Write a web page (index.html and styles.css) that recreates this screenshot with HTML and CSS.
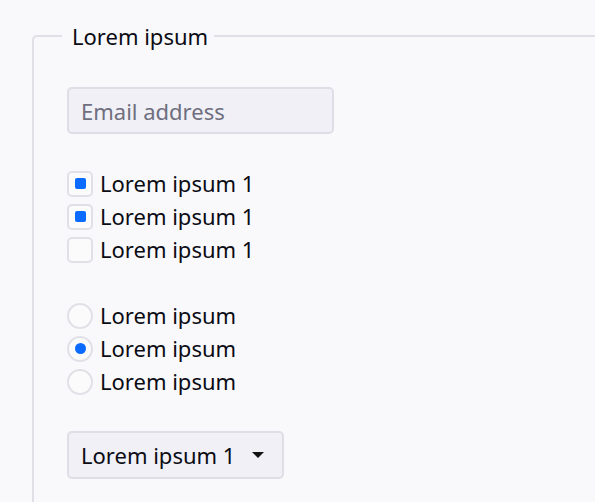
FILE: index.html
```html
<!DOCTYPE html>
<html lang="en">
<head>
<meta charset="utf-8">
<title>Form</title>
<link rel="stylesheet" href="styles.css">
</head>
<body>
<form class="form">
  <fieldset class="group">
    <legend class="group-title">Lorem ipsum</legend>
    <input class="text-input" type="email" placeholder="Email address">
    <div class="options">
      <label class="option"><span class="check is-on"></span>Lorem ipsum 1</label>
      <label class="option"><span class="check is-on"></span>Lorem ipsum 1</label>
      <label class="option"><span class="check"></span>Lorem ipsum 1</label>
    </div>
    <div class="options">
      <label class="option"><span class="radio"></span>Lorem ipsum</label>
      <label class="option"><span class="radio is-on"></span>Lorem ipsum</label>
      <label class="option"><span class="radio"></span>Lorem ipsum</label>
    </div>
    <div class="select">
      <span class="select-value">Lorem ipsum 1</span>
      <span class="select-arrow"></span>
    </div>
  </fieldset>
</form>
</body>
</html>
```

FILE: styles.css
```css
html, body {
  margin: 0;
  padding: 0;
  background: #f9f9fb;
}
body {
  font-family: "Noto Sans", "Open Sans", sans-serif;
  font-size: 22px;
  line-height: 33px;
  color: #0b0b14;
  overflow: hidden;
  height: 502px;
}
.form {
  padding: 23px 0 0 32px;
}
.group {
  margin: 0;
  border: 2px solid #e0e0e7;
  border-right: none;
  border-radius: 5px 0 0 5px;
  padding: 38px 0 60px 33px;
  display: flex;
  flex-direction: column;
  align-items: flex-start;
  gap: 33px;
}
.group-title {
  margin-left: -5px;
  padding: 0 6px 0 10px;
  line-height: 26px;
}
.text-input {
  box-sizing: border-box;
  width: 267px;
  height: 47px;
  margin: 0;
  border: 2px solid #dedee6;
  border-radius: 5px;
  background: #f0f0f6;
  padding: 0 12px;
  font: inherit;
  color: inherit;
  outline: none;
}
.text-input::placeholder {
  color: #6e6e7e;
}
.options {
  display: flex;
  flex-direction: column;
}
.option {
  display: flex;
  align-items: center;
  gap: 7px;
  height: 33px;
}
.check, .radio {
  box-sizing: border-box;
  width: 26px;
  height: 26px;
  border: 2px solid #e0e0e7;
  background: #fbfbfc;
  display: flex;
  align-items: center;
  justify-content: center;
  flex: none;
}
.check {
  border-radius: 5px;
}
.radio {
  border-radius: 50%;
}
.check.is-on::after {
  content: "";
  width: 11px;
  height: 11px;
  border-radius: 2px;
  background: #0b6bff;
}
.radio.is-on::after {
  content: "";
  width: 11px;
  height: 11px;
  border-radius: 50%;
  background: #0b6bff;
}
.select {
  box-sizing: border-box;
  width: 217px;
  height: 48px;
  border: 2px solid #dedee6;
  border-radius: 5px;
  background: #f0f0f6;
  padding: 0 18px 0 12px;
  display: flex;
  align-items: center;
  justify-content: space-between;
}
.select-arrow {
  width: 0;
  height: 0;
  border-left: 6px solid transparent;
  border-right: 6px solid transparent;
  border-top: 6px solid #111;
}
```
